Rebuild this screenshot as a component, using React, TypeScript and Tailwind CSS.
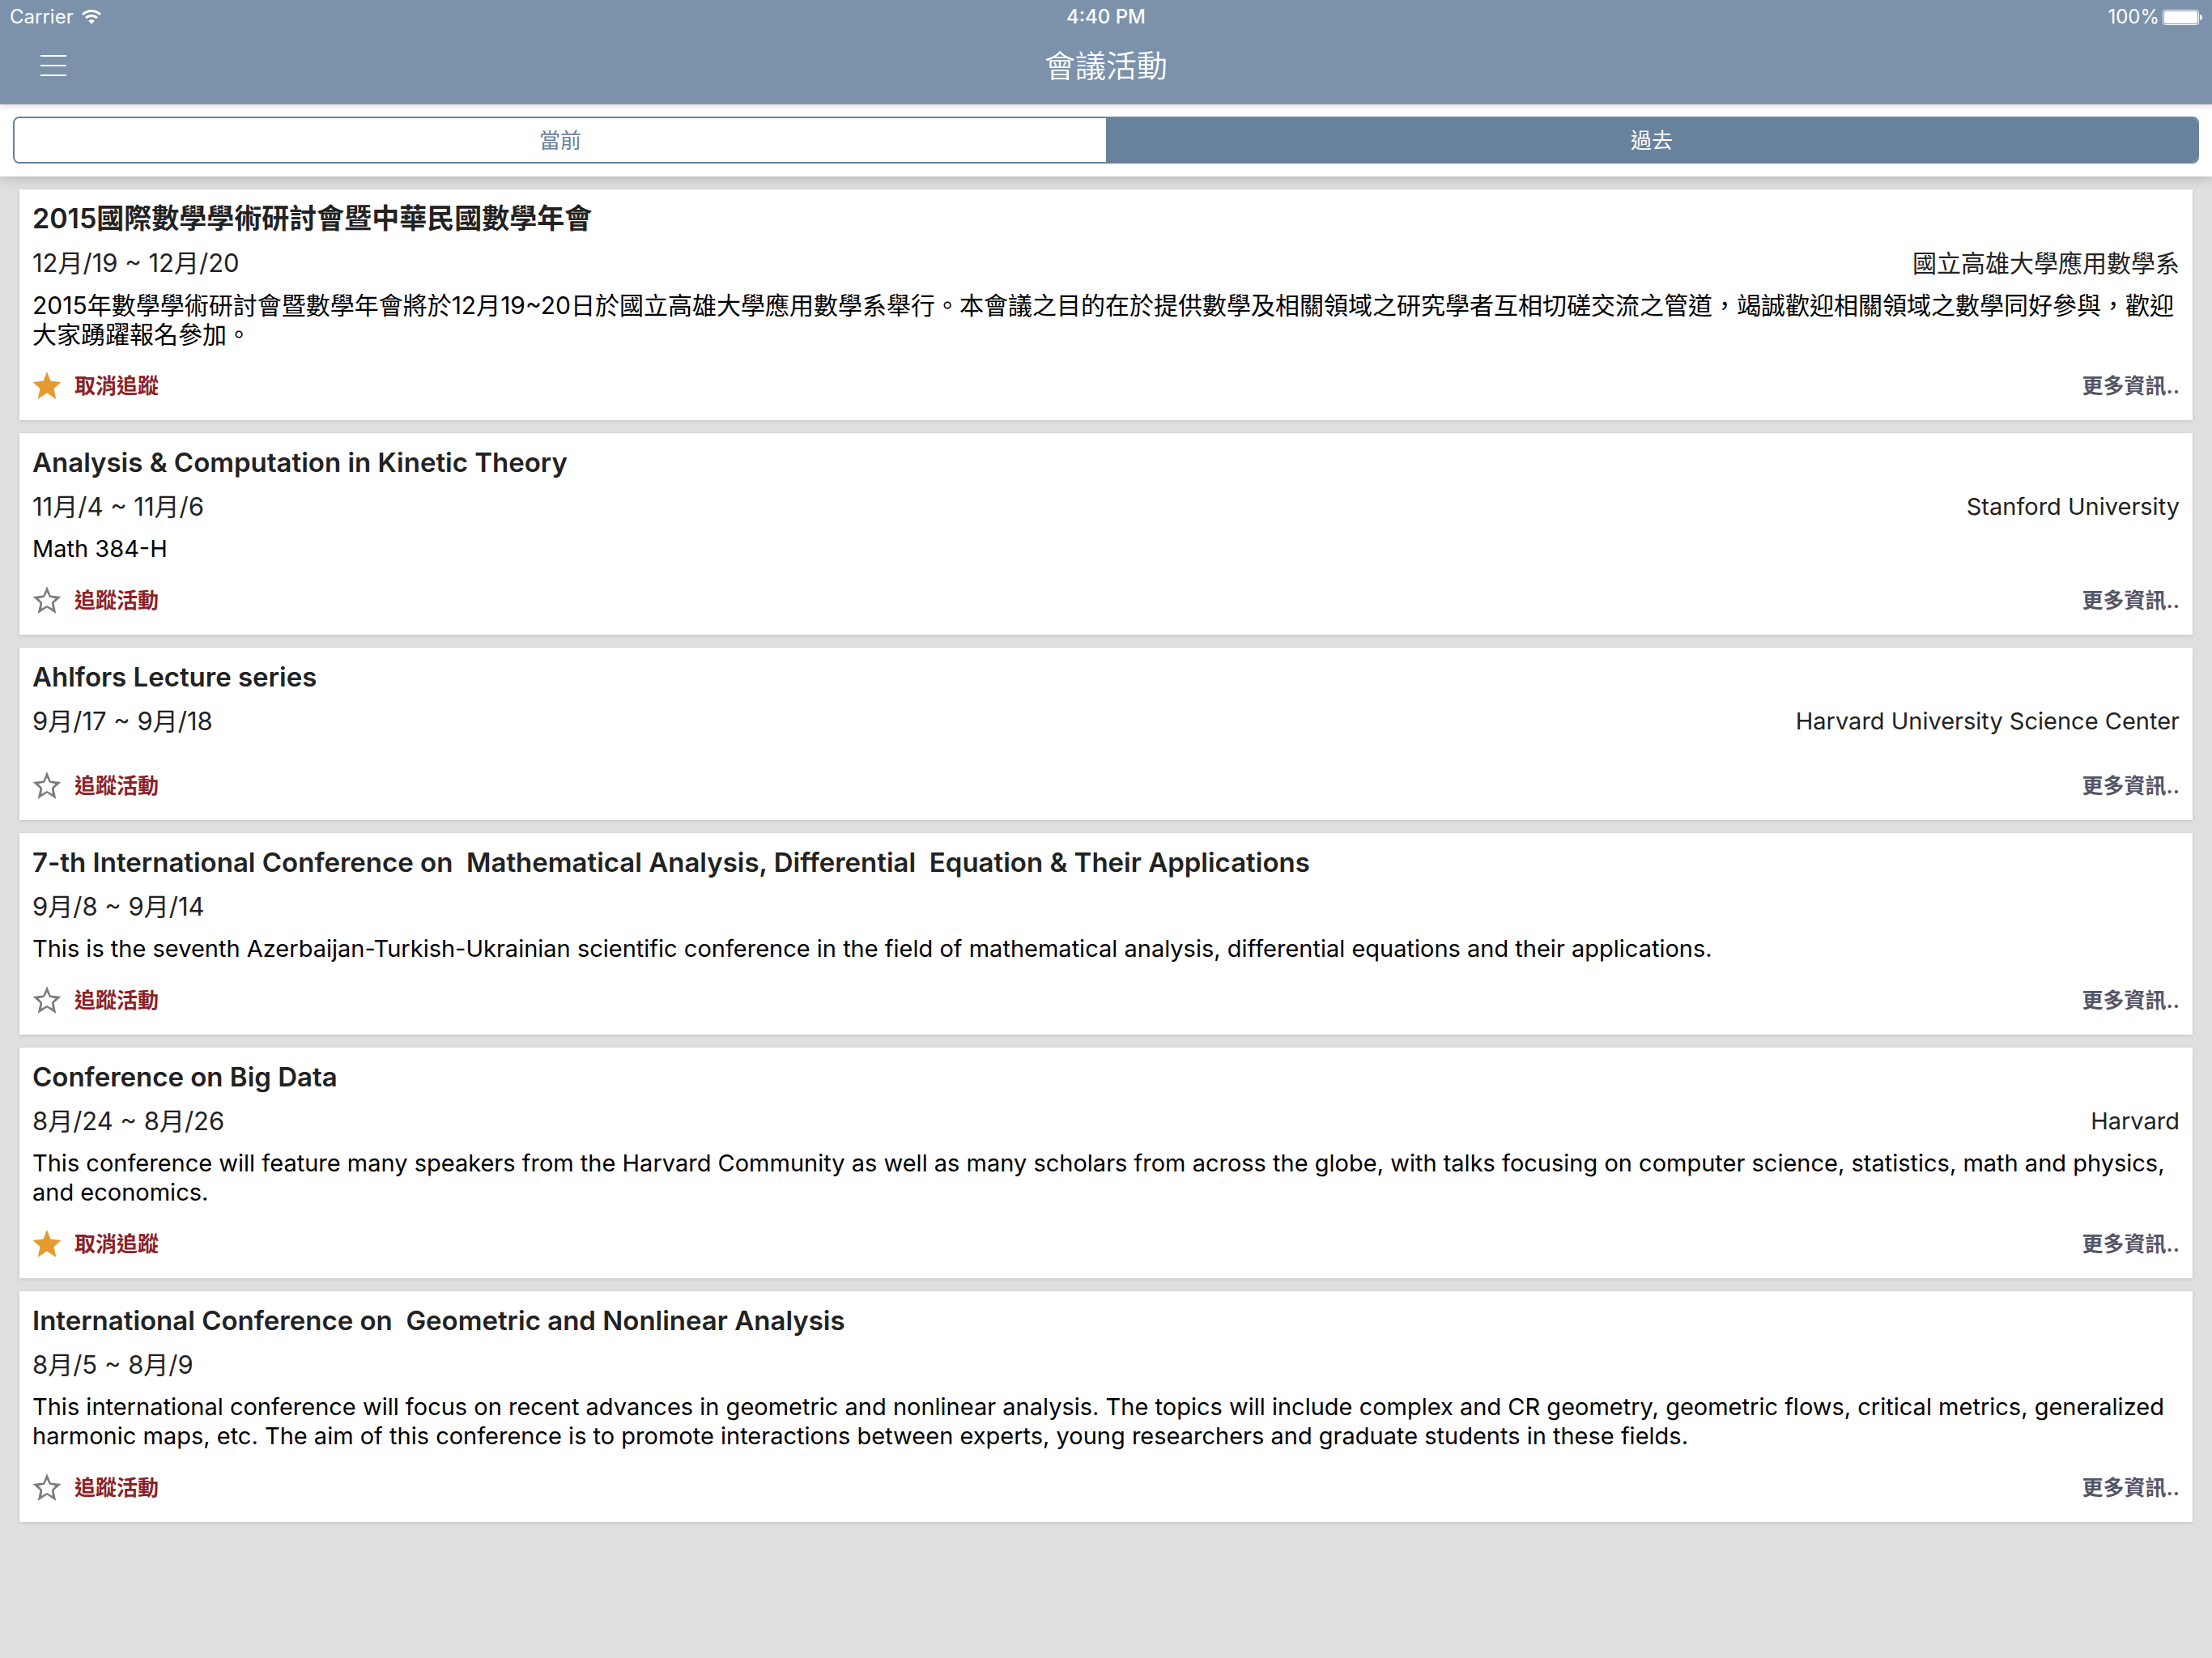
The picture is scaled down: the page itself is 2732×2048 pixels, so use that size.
import { useState } from "react";

type Conference = {
  id: number;
  title: string;
  dates: string;
  place?: string;
  description?: string;
  chinese?: boolean;
  followed: boolean;
};

const conferences: Conference[] = [
  {
    id: 1,
    title: "2015國際數學學術研討會暨中華民國數學年會",
    dates: "12月/19 ~ 12月/20",
    place: "國立高雄大學應用數學系",
    description:
      "2015年數學學術研討會暨數學年會將於12月19~20日於國立高雄大學應用數學系舉行。本會議之目的在於提供數學及相關領域之研究學者互相切磋交流之管道，竭誠歡迎相關領域之數學同好參與，歡迎大家踴躍報名參加。",
    chinese: true,
    followed: true,
  },
  {
    id: 2,
    title: "Analysis & Computation in Kinetic Theory",
    dates: "11月/4 ~ 11月/6",
    place: "Stanford University",
    description: "Math 384-H",
    followed: false,
  },
  {
    id: 3,
    title: "Ahlfors Lecture series",
    dates: "9月/17 ~ 9月/18",
    place: "Harvard University Science Center",
    followed: false,
  },
  {
    id: 4,
    title: "7-th International Conference on  Mathematical Analysis, Differential  Equation & Their Applications",
    dates: "9月/8 ~ 9月/14",
    description:
      "This is the seventh Azerbaijan-Turkish-Ukrainian scientific conference in the field of mathematical analysis, differential equations and their applications.",
    followed: false,
  },
  {
    id: 5,
    title: "Conference on Big Data",
    dates: "8月/24 ~ 8月/26",
    place: "Harvard",
    description:
      "This conference will feature many speakers from the Harvard Community as well as many scholars from across the globe, with talks focusing on computer science, statistics, math and physics, and economics.",
    followed: true,
  },
  {
    id: 6,
    title: "International Conference on  Geometric and Nonlinear Analysis",
    dates: "8月/5 ~ 8月/9",
    description:
      "This international conference will focus on recent advances in geometric and nonlinear analysis. The topics will include complex and CR geometry, geometric flows, critical metrics, generalized harmonic maps, etc. The aim of this conference is to promote interactions between experts, young researchers and graduate students in these fields.",
    followed: false,
  },
];

function WifiIcon() {
  return (
    <svg viewBox="0 0 24 18" className="h-[18px] w-6" fill="none" stroke="white" strokeWidth="3" aria-hidden="true">
      <path d="M1.1 6a15.500 15.500 0 0 1 21.800 0" />
      <path d="M5.100 10.300a9.800 9.800 0 0 1 13.800 0" />
      <path d="M12 17.800 8.200 13.700a5.600 5.600 0 0 1 7.600 0Z" fill="white" stroke="none" />
    </svg>
  );
}

function BatteryIcon() {
  return (
    <svg viewBox="0 0 49 19" className="h-[19px] w-[49px]" aria-hidden="true">
      <rect x="0.5" y="0.5" width="44" height="18" rx="3" fill="none" stroke="white" />
      <rect x="2" y="2" width="41" height="15" rx="2" fill="white" />
      <path d="M46 6c2 .4 3 1.700 3 3.500s-1 3.100-3 3.500z" fill="white" />
    </svg>
  );
}

const starOutline =
  "M18 1L22.500 12.500 35.500 14 26.500 22 29.300 35 18 27.500 6.700 35 9.500 22 .5 14 13.500 12.500z";
const starHole =
  "M18 8.400L21.100 14.700 28.500 16.200 23.800 21.200 24.800 28.800 18 24.900 11.200 28.800 12.200 21.200 7.500 16.200 14.900 14.700z";

function Star({ filled }: { filled: boolean }) {
  return (
    <svg viewBox="0 0 36 36" className="size-9" aria-hidden="true">
      {filled ? (
        <path d={starOutline} fill="#e39b30" />
      ) : (
        <path d={starOutline + starHole} fill="#7c7c7c" fillRule="evenodd" />
      )}
    </svg>
  );
}

function ConferenceCard({ conference }: { conference: Conference }) {
  const [followed, setFollowed] = useState(conference.followed);
  const bodySize = conference.chinese ? "text-[30px]" : "text-[29px]";
  return (
    <article className="flex flex-col bg-white px-4 pt-4 pb-[23px] text-[#222] shadow-[0_1px_4px_rgba(0,0,0,0.13)]">
      <h2
        className={`${conference.chinese ? "text-[34px]" : "text-[33px]"} leading-10 font-semibold whitespace-pre-wrap`}
      >
        {conference.title}
      </h2>
      <div className="mt-[17px] flex justify-between leading-9">
        <p className="text-[31px]">{conference.dates}</p>
        <p className={bodySize}>{conference.place}</p>
      </div>
      <p className={`${bodySize} mt-4 leading-9 text-black`}>{conference.description}</p>
      <div className="mt-[25px] flex h-10 items-center justify-between text-[26px] font-semibold">
        <button type="button" onClick={() => setFollowed(!followed)} className="flex items-center gap-4 text-[#8b2226]">
          <Star filled={followed} />
          {followed ? "取消追蹤" : "追蹤活動"}
        </button>
        <a href="#more" className="text-[#555566]">
          更多資訊..
        </a>
      </div>
    </article>
  );
}

export default function App() {
  const [tab, setTab] = useState("past");
  const tabs = [
    { id: "current", label: "當前" },
    { id: "past", label: "過去" },
  ];
  return (
    <div lang="zh-Hant" className="min-h-screen bg-[#dfdfdf] font-['Inter','Noto_Sans_CJK_TC',sans-serif]">
      <header className="relative z-20 border-b border-[#999] bg-[#7c92ab] pb-2 text-white shadow-[0_2px_8px_rgba(0,0,0,0.15)]">
        <div className="grid h-[42px] grid-cols-3 items-center px-3 text-[24px]">
          <div className="flex items-center gap-2.5">
            <span>Carrier</span>
            <WifiIcon />
          </div>
          <span className="text-center font-medium">4:40 PM</span>
          <div className="flex items-center justify-end gap-1">
            <span>100%</span>
            <BatteryIcon />
          </div>
        </div>
        <div className="grid h-[78px] grid-cols-[1fr_auto_1fr] items-center px-[50px]">
          <button type="button" aria-label="Menu" className="flex w-8 flex-col gap-2.5">
            <span className="h-0.5 w-full bg-white" />
            <span className="h-0.5 w-full bg-white" />
            <span className="h-0.5 w-full bg-white" />
          </button>
          <h1 className="text-[38px] font-[350]">會議活動</h1>
        </div>
      </header>
      <nav className="relative z-10 bg-white px-4 pt-[15px] pb-4 shadow-[0_2px_14px_rgba(0,0,0,0.2)]">
        <div className="flex h-[58px] overflow-hidden rounded-lg border-2 border-[#68819c]">
          {tabs.map((t) => (
            <button
              key={t.id}
              type="button"
              aria-pressed={tab === t.id}
              onClick={() => setTab(t.id)}
              className={
                tab === t.id
                  ? "flex-1 bg-[#68819c] text-[26px] text-white"
                  : "flex-1 bg-white text-[26px] text-[#68819c]"
              }
            >
              {t.label}
            </button>
          ))}
        </div>
      </nav>
      <main className="flex flex-col gap-4 px-6 py-4">
        {conferences.map((c) => (
          <ConferenceCard key={c.id} conference={c} />
        ))}
      </main>
    </div>
  );
}
